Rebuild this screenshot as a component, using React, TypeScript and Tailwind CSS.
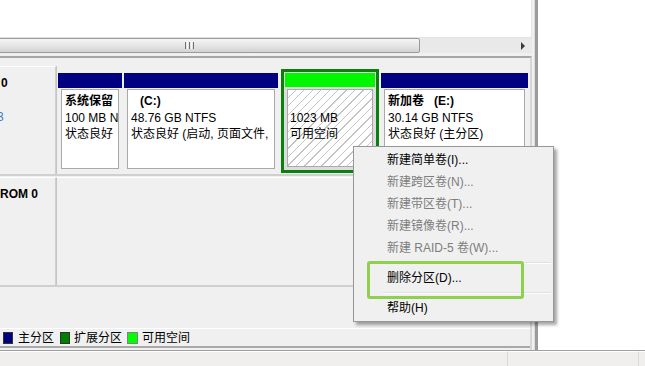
import React from "react";

const F = "font-['Liberation_Sans','Noto_Sans_CJK_SC',sans-serif]";

function Part({ w, ml, children }: { w: string; ml: string; children: React.ReactNode }) {
  return (
    <div className={`${w} ${ml} h-[103px] pt-[3px] pb-[4px] flex flex-col bg-[#f0f0f0]`}>
      <div className="h-[15px] bg-[#000080] shrink-0" />
      <div className="flex-1 mt-[1px] mx-[3px] bg-white border border-[#a9a9a9] pl-[3px] pt-[3px] overflow-hidden whitespace-nowrap leading-[16.5px]">
        {children}
      </div>
    </div>
  );
}

function Item({ text, disabled }: { text: string; disabled?: boolean }) {
  return (
    <div className={`h-[22px] flex items-center pl-[32px] ${disabled ? "text-[#7d7d7d]" : "text-black"}`}>
      {text}
    </div>
  );
}

function Sep() {
  return (
    <div className="h-[8px] flex flex-col justify-center pl-[28px] pr-[1px]">
      <div className="h-px bg-[#e0e0e0]" />
      <div className="h-px bg-white" />
    </div>
  );
}

export default function App() {
  return (
    <div className={`${F} text-[12px] text-black w-[645px] h-[366px] relative overflow-hidden bg-white flex flex-col`}>
      <div className="h-[350px] flex">
        {/* left column */}
        <div className="w-[535px] flex flex-col bg-[#f0f0f0] border-r border-[#dcdcdc]">
          <div className="h-[37px] bg-white mr-[2px] border-r border-[#e6e6e6]" />
          {/* scrollbar */}
          <div className="h-[16px] mr-[2px] flex bg-[#e9e9e9] border-t border-[#e2e2e2] overflow-hidden">
            <div className="w-[462px] -ml-[42px] shrink-0 border border-[#9a9a9a] rounded-[2px] bg-gradient-to-b from-[#f5f5f5] via-[#e6e6e6] to-[#d2d2d2] flex items-center justify-center">
              <div className="flex gap-[1px]">
                <div className="w-[1px] h-[7px] bg-[#6f6f6f]" />
                <div className="w-[1px] h-[7px] bg-[#f8f8f8]" />
                <div className="w-[1px] h-[7px] bg-[#6f6f6f]" />
                <div className="w-[1px] h-[7px] bg-[#f8f8f8]" />
                <div className="w-[1px] h-[7px] bg-[#6f6f6f]" />
              </div>
            </div>
            <div className="flex-1 flex items-center justify-end pr-[7px]">
              <div className="w-0 h-0 border-y-[4px] border-y-transparent border-l-[4px] border-l-[#3a3a3a]" />
            </div>
          </div>
          {/* disk pane */}
          <div className="mt-[3px] flex-1 flex flex-col border-t-2 border-[#a6a6a6] border-r-2 border-r-[#d6d6d6] mr-[2px] pt-[8px]">
            {/* row 1 */}
            <div className="h-[110px] flex border-b-2 border-[#d0d0d0]">
              <div className="w-[56px] shrink-0 border-r border-[#cfcfcf] border-t border-t-white pt-[8px] leading-[17px] overflow-hidden whitespace-nowrap">
                <div className="font-bold pl-[1px]">0</div>
                <div>&nbsp;</div>
                <div className="text-[#3f7fc4] -ml-[3px]">3</div>
              </div>
              <div className="flex-1 flex pt-[4px] border-l border-[#c4c4c4]">
                <Part w="w-[64px]" ml="ml-[1px]">
                  <div className="font-bold">系统保留</div>
                  <div>100 MB N</div>
                  <div>状态良好</div>
                </Part>
                <Part w="w-[154px]" ml="ml-[2px]">
                  <div className="font-bold pl-[9px]">(C:)</div>
                  <div>48.76 GB NTFS</div>
                  <div>状态良好 (启动, 页面文件,</div>
                </Part>
                <div className="w-[98px] ml-[3px] h-[104px] -mt-[1px] border-[3px] border-[#0b800b] p-[1px] flex flex-col bg-[#dcdcdc]">
                  <div className="h-[14px] bg-[#00f700] shrink-0" />
                  <div className="flex-1 mt-[2px] mx-[2px] mb-[2px] border border-[#a9a9a9] bg-[repeating-linear-gradient(135deg,#ffffff_0px,#ffffff_5px,#c4c4c4_5px,#c4c4c4_6px)] pl-[2px] pt-[3px] leading-[16.5px] whitespace-nowrap">
                    <div>&nbsp;</div>
                    <div>1023 MB</div>
                    <div>可用空间</div>
                  </div>
                </div>
                <Part w="w-[147px]" ml="ml-[2px]">
                  <div className="font-bold">新加卷&nbsp;&nbsp;&nbsp;(E:)</div>
                  <div>30.14 GB NTFS</div>
                  <div>状态良好 (主分区)</div>
                </Part>
              </div>
            </div>
            {/* row 2 */}
            <div className="h-[110px] mt-[1px] flex border-b-2 border-[#d0d0d0]">
              <div className="w-[56px] shrink-0 border-r border-[#cfcfcf] border-t border-t-white pt-[8px] leading-[17px] overflow-hidden whitespace-nowrap">
                <div className="font-bold">ROM 0</div>
              </div>
              <div className="flex-1 border-l border-[#c4c4c4] border-t border-t-white" />
            </div>
            <div className="flex-1" />
            {/* legend */}
            <div className="h-[20px] flex items-center border-t border-white border-b-2 border-b-[#a9a9a9] mb-[2px] leading-none">
              <div className="ml-[3px] w-[10px] h-[12px] bg-[#000080] border border-[#303030]" />
              <span className="ml-[5px]">主分区</span>
              <div className="ml-[6px] w-[10px] h-[12px] bg-[#008000] border border-[#303030]" />
              <span className="ml-[4px]">扩展分区</span>
              <div className="ml-[5px] w-[11px] h-[12px] bg-[#00ff00] border border-[#808080]" />
              <span className="ml-[4px]">可用空间</span>
            </div>
          </div>
        </div>
        <div className="w-[3px] bg-[#9b9b9b]" />
        <div className="flex-1 bg-white" />
      </div>
      {/* status bar */}
      <div className="h-[16px] flex bg-[#f0efee] border-t border-[#a0a0a0]">
        <div className="w-[507px] border-t border-white" />
        <div className="w-[131px] border-l border-[#d9d9d9] border-t border-t-white" />
        <div className="flex-1 border-l border-[#d9d9d9] border-t border-t-white" />
      </div>

      {/* context menu */}
      <div className="absolute left-[353px] top-[146px] w-[201px] h-[176px] bg-[#f0f0f0] border border-[#979797] shadow-[3px_3px_3px_rgba(0,0,0,0.35)] pt-[2px] px-[1px]">
        <Item text="新建简单卷(I)..." />
        <Item text="新建跨区卷(N)..." disabled />
        <Item text="新建带区卷(T)..." disabled />
        <Item text="新建镜像卷(R)..." disabled />
        <Item text="新建 RAID-5 卷(W)..." disabled />
        <Sep />
        <Item text="删除分区(D)..." />
        <Sep />
        <Item text="帮助(H)" />
      </div>
      {/* highlight frame */}
      <div className="absolute left-[367px] top-[261px] w-[157px] h-[38px] border-[3px] border-[#8fd14f] rounded-[3px]" />
    </div>
  );
}
